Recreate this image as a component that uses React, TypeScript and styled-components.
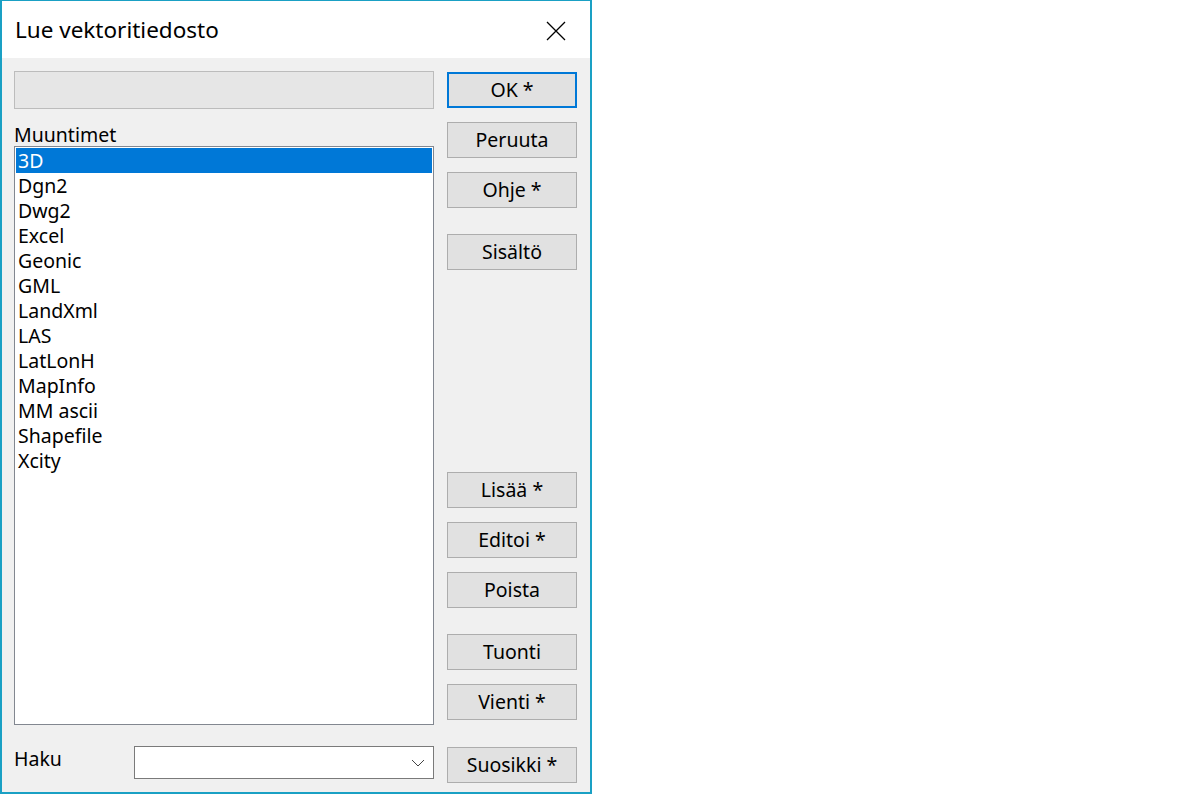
import React from "react";
import styled, { createGlobalStyle } from "styled-components";

const Global = createGlobalStyle`
  html, body { margin: 0; padding: 0; background: #ffffff; }
  body { font-family: "Noto Sans", "Open Sans", sans-serif; color: #000; }
  * { box-sizing: border-box; }
`;

const Window = styled.div`
  width: 592px;
  height: 794px;
  border-style: solid;
  border-color: #1aa0c4;
  border-width: 1px 2px 2px 2px;
  display: flex;
  flex-direction: column;
  background: #f0f0f0;
`;

const TitleBar = styled.div`
  height: 57px;
  background: #ffffff;
  display: flex;
  align-items: center;
  justify-content: space-between;
  padding: 0 22px 0 13px;
  flex-shrink: 0;
`;

const Title = styled.div`
  font-size: 22.5px;
  line-height: 26px;
  padding-top: 1px;
`;

const CloseBtn = styled.div`
  width: 24px;
  height: 24px;
  display: flex;
  align-items: center;
  justify-content: center;
  padding-top: 2px;
`;

const Body = styled.div`
  flex: 1;
  display: flex;
  padding: 13px 13px 0 12px;
  gap: 13px;
`;

const LeftCol = styled.div`
  width: 420px;
  display: flex;
  flex-direction: column;
`;

const DisabledField = styled.div`
  height: 38px;
  background: #e6e6e6;
  border: 1px solid #bcbcbc;
`;

const Label = styled.div<{ $mt?: number }>`
  font-size: 19.5px;
  line-height: 23px;
  margin-top: ${(p) => p.$mt ?? 0}px;
  height: 23px;
  white-space: nowrap;
`;

const ListBox = styled.div`
  height: 579px;
  background: #ffffff;
  border: 1px solid #828790;
  padding: 1px;
  display: flex;
  flex-direction: column;
`;

const ListItem = styled.div<{ $selected?: boolean }>`
  height: 25px;
  line-height: 25px;
  font-size: 19.5px;
  padding-left: 2px;
  background: ${(p) => (p.$selected ? "#0078d7" : "transparent")};
  color: ${(p) => (p.$selected ? "#ffffff" : "#000000")};
  white-space: nowrap;
`;

const SearchRow = styled.div`
  display: flex;
  margin-top: 21px;
  align-items: flex-start;
`;

const SearchLabel = styled.div`
  width: 120px;
  font-size: 19.5px;
  line-height: 23px;
  padding-top: 1px;
`;

const Combo = styled.div`
  width: 300px;
  height: 33px;
  background: #ffffff;
  border: 1px solid #7a7a7a;
  display: flex;
  align-items: center;
  justify-content: flex-end;
  padding-right: 8px;
`;

const RightCol = styled.div`
  width: 130px;
  display: flex;
  flex-direction: column;
  padding-top: 1px;
`;

const Button = styled.div<{ $mt: number; $default?: boolean }>`
  height: 36px;
  margin-top: ${(p) => p.$mt}px;
  background: #e1e1e1;
  border: ${(p) => (p.$default ? "2px solid #0078d7" : "1px solid #adadad")};
  display: flex;
  align-items: center;
  justify-content: center;
  font-size: 19.5px;
  line-height: 23px;
  padding-bottom: 2px;
  white-space: nowrap;
`;

const items = [
  "3D",
  "Dgn2",
  "Dwg2",
  "Excel",
  "Geonic",
  "GML",
  "LandXml",
  "LAS",
  "LatLonH",
  "MapInfo",
  "MM ascii",
  "Shapefile",
  "Xcity",
];

const buttons: { label: string; mt: number; def?: boolean }[] = [
  { label: "OK *", mt: 0, def: true },
  { label: "Peruuta", mt: 14 },
  { label: "Ohje *", mt: 14 },
  { label: "Sisältö", mt: 26 },
  { label: "Lisää *", mt: 202 },
  { label: "Editoi *", mt: 14 },
  { label: "Poista", mt: 14 },
  { label: "Tuonti", mt: 26 },
  { label: "Vienti *", mt: 14 },
  { label: "Suosikki *", mt: 27 },
];

export default function App() {
  return (
    <>
      <Global />
      <Window>
        <TitleBar>
          <Title>Lue vektoritiedosto</Title>
          <CloseBtn>
            <svg width="20" height="20" viewBox="0 0 20 20">
              <path d="M1 1 L19 19 M19 1 L1 19" stroke="#000" strokeWidth="1.3" fill="none" />
            </svg>
          </CloseBtn>
        </TitleBar>
        <Body>
          <LeftCol>
            <DisabledField />
            <Label $mt={14}>Muuntimet</Label>
            <ListBox>
              {items.map((it, i) => (
                <ListItem key={it} $selected={i === 0}>
                  {it}
                </ListItem>
              ))}
            </ListBox>
            <SearchRow>
              <SearchLabel>Haku</SearchLabel>
              <Combo>
                <svg width="14" height="8" viewBox="0 0 14 8">
                  <path d="M1 1 L7 7 L13 1" stroke="#444" strokeWidth="1" fill="none" />
                </svg>
              </Combo>
            </SearchRow>
          </LeftCol>
          <RightCol>
            {buttons.map((b) => (
              <Button key={b.label} $mt={b.mt} $default={b.def}>
                {b.label}
              </Button>
            ))}
          </RightCol>
        </Body>
      </Window>
    </>
  );
}
